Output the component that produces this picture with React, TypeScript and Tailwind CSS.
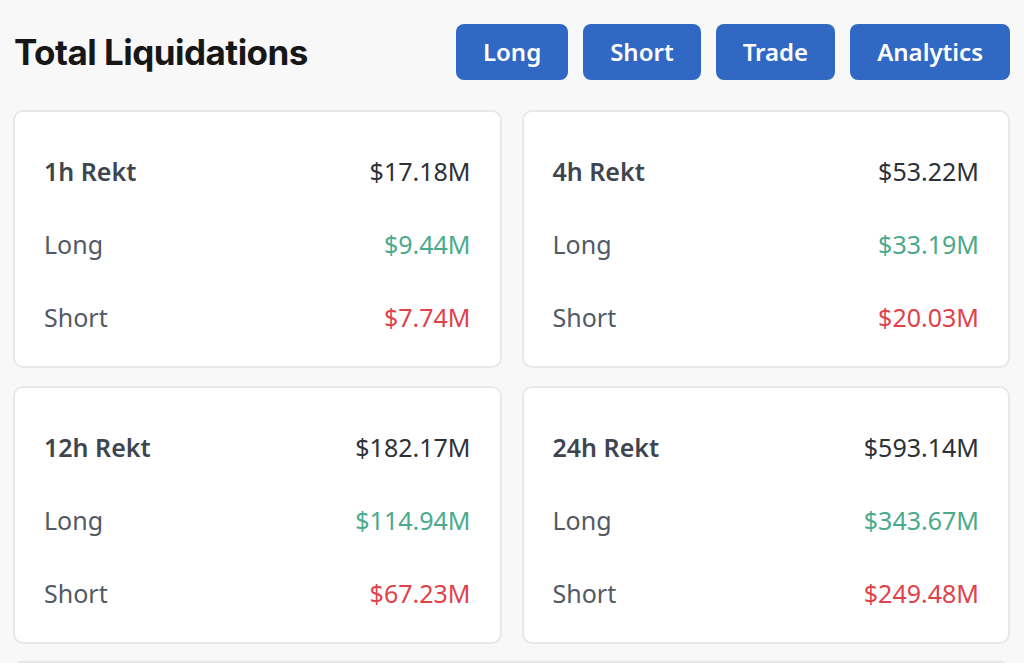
const stats = [
  { span: "1h", total: "$17.18M", long: "$9.44M", short: "$7.74M" },
  { span: "4h", total: "$53.22M", long: "$33.19M", short: "$20.03M" },
  { span: "12h", total: "$182.17M", long: "$114.94M", short: "$67.23M" },
  { span: "24h", total: "$593.14M", long: "$343.67M", short: "$249.48M" },
];

const tabs = ["Long", "Short", "Trade", "Analytics"];

function RektCard({ span, total, long, short }: (typeof stats)[number]) {
  return (
    <div className="rounded-[10px] border-2 border-[#e8e8e8] bg-white px-[29px] pb-[12px] pt-[23px]">
      <div className="flex h-[73px] items-center justify-between">
        <span className="font-semibold text-[#3e454f]">{span} Rekt</span>
        <span className="text-[#2c3138]">{total}</span>
      </div>
      <div className="flex h-[73px] items-center justify-between">
        <span className="text-[#525a65]">Long</span>
        <span className="text-[#4aaa8b]">{long}</span>
      </div>
      <div className="flex h-[73px] items-center justify-between">
        <span className="text-[#525a65]">Short</span>
        <span className="text-[#e1424a]">{short}</span>
      </div>
    </div>
  );
}

export default function App() {
  return (
    <div className="h-[663px] overflow-hidden bg-[#f8f8f8] pl-[13px] pr-[14px] pt-[24px]" style={{ fontFamily: "'Noto Sans', sans-serif" }}>
      <header className="flex items-center justify-between">
        <h1 className="pl-[1px] font-['Inter',sans-serif] text-[35px] font-bold tracking-[-0.015em] text-[#171717]">Total Liquidations</h1>
        <div className="flex gap-[15px]">
          {tabs.map((t) => (
            <button key={t} className="h-[56px] rounded-[8px] bg-[#3168c4] px-[27px] text-[24px] font-semibold text-white">
              {t}
            </button>
          ))}
        </div>
      </header>

      <div className="mt-[30px] grid grid-cols-2 gap-x-[20px] gap-y-[18px] text-[25px]">
        {stats.map((s) => (
          <RektCard key={s.span} {...s} />
        ))}
      </div>

      {/* next panel peeking in below */}
      <div className="mt-[17px] h-[40px] rounded-t-[10px] border-2 border-[#e4e4e4] bg-white" />
    </div>
  );
}
